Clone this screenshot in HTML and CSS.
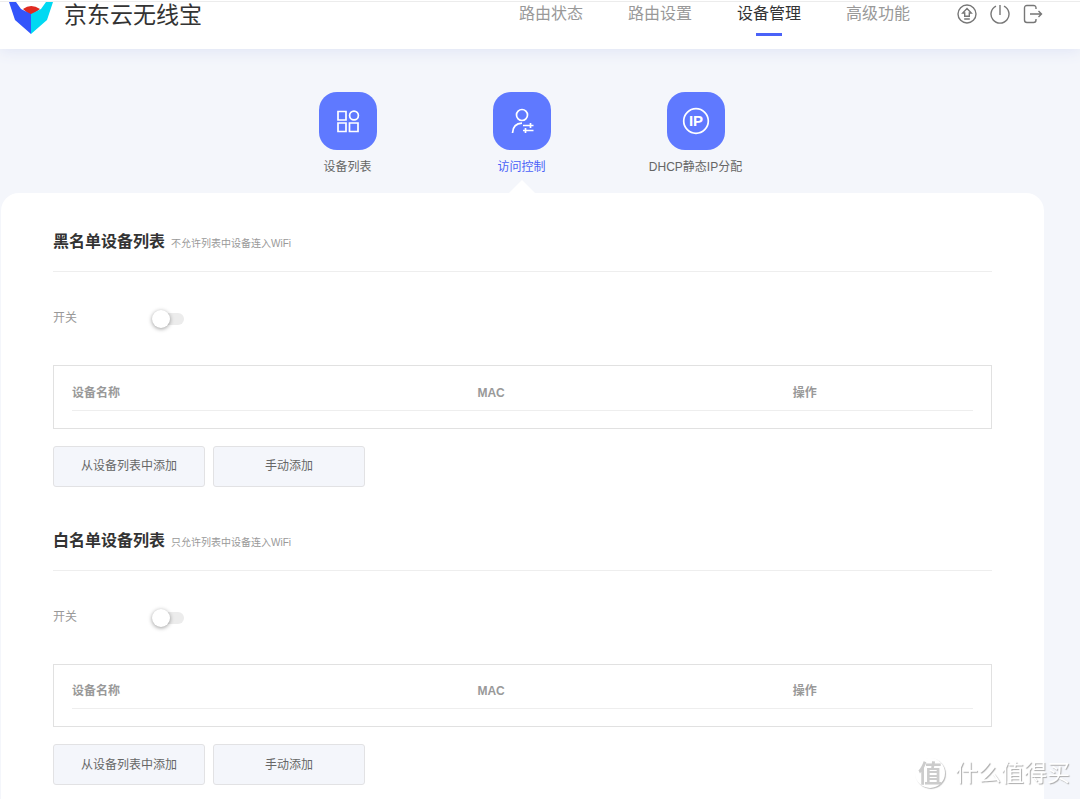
FILE: index.html
```html
<!DOCTYPE html>
<html lang="zh-CN">
<head>
<meta charset="utf-8">
<title>京东云无线宝</title>
<link rel="stylesheet" href="styles.css">
</head>
<body>
<header class="topbar">
  <a class="brand" href="#">
    <svg class="brand-mark" width="44" height="34" viewBox="0 0 44 34" aria-hidden="true">
      <path d="M14 9Q22 3 31 9L22 16Z" fill="#e02a20"/>
      <path d="M0 2H7L12 9L22 14V34L6 20Z" fill="#3355fb"/>
      <path d="M44 2H37L32 9L22 14V34L38 20Z" fill="#00d9f2"/>
    </svg>
    <span>京东云无线宝</span>
  </a>
  <nav class="menu">
    <a href="#">路由状态</a>
    <a href="#">路由设置</a>
    <a class="active" href="#">设备管理</a>
    <a href="#">高级功能</a>
  </nav>
  <div class="tools">
    <button type="button" aria-label="升级"><svg width="20" height="20" viewBox="0 0 20 20"><circle cx="10" cy="10" r="9"/><path d="M10 4.500L14.300 9H12.300V12.300H7.700V9H5.700ZM7.200 15H12.800"/></svg></button>
    <button type="button" aria-label="重启"><svg width="20" height="20" viewBox="0 0 20 20"><path d="M6 2.100A9 9 0 1 0 14 2.100M10 1V11"/></svg></button>
    <button type="button" aria-label="退出"><svg width="20" height="20" viewBox="0 0 20 20"><path d="M13 5V4Q13 1.500 10.500 1.500H4Q1.500 1.500 1.500 4V16Q1.500 18.500 4 18.500H10.500Q13 18.500 13 16V15M7 10H18.500M15.500 7L18.500 10L15.500 13"/></svg></button>
  </div>
</header>
<main class="page">
  <nav class="tabs">
    <a class="tab" href="#">
      <span class="tile"><svg width="32" height="32" viewBox="0 0 32 32"><path d="M6 6.500H14V15H6ZM6 18H14V26.500H6ZM17.500 18H26V26.500H17.500Z"/><circle cx="22" cy="10.500" r="4.400"/></svg></span>
      <span>设备列表</span>
    </a>
    <a class="tab current" href="#">
      <span class="tile"><svg width="32" height="32" viewBox="0 0 32 32"><circle cx="16" cy="10" r="5.500"/><path d="M6.500 28Q7 18.500 16 18.200M17 20.500H27.500M24.500 18V23M17 25.500H27.500M19.500 23V28"/></svg></span>
      <span>访问控制</span>
    </a>
    <a class="tab" href="#">
      <span class="tile"><svg width="32" height="32" viewBox="0 0 32 32"><circle cx="16" cy="16" r="12.300"/><text class="ip" x="16" y="21" text-anchor="middle">IP</text></svg></span>
      <span>DHCP静态IP分配</span>
    </a>
  </nav>
  <div class="panel">
    <section class="group">
      <div class="heading"><h2>黑名单设备列表</h2><p>不允许列表中设备连入WiFi</p></div>
      <div class="field"><label for="black">开关</label><input class="switch" id="black" type="checkbox" role="switch"></div>
      <div class="list">
        <table>
          <thead><tr><th class="name">设备名称</th><th class="mac">MAC</th><th>操作</th></tr></thead>
        </table>
      </div>
      <div class="actions"><button type="button">从设备列表中添加</button><button type="button">手动添加</button></div>
    </section>
    <section class="group">
      <div class="heading"><h2>白名单设备列表</h2><p>只允许列表中设备连入WiFi</p></div>
      <div class="field"><label for="white">开关</label><input class="switch" id="white" type="checkbox" role="switch"></div>
      <div class="list">
        <table>
          <thead><tr><th class="name">设备名称</th><th class="mac">MAC</th><th>操作</th></tr></thead>
        </table>
      </div>
      <div class="actions"><button type="button">从设备列表中添加</button><button type="button">手动添加</button></div>
    </section>
  </div>
</main>
<div class="watermark"><span class="seal">值</span><span>什么值得买</span></div>
</body>
</html>
```
FILE: styles.css
```css
* { box-sizing: border-box; }
body {
  display: flex;
  flex-direction: column;
  min-height: 100vh;
  margin: 0;
  background: #f4f6fb;
  color: #666;
  font: 12px/16px "Liberation Sans", "Noto Sans CJK SC", sans-serif;
}
a { color: inherit; text-decoration: none; }
button { font: inherit; color: inherit; cursor: pointer; }
h2, p { margin: 0; }

.topbar {
  display: flex;
  align-items: flex-start;
  height: 49px;
  padding: 0 37px 0 9px;
  background: #fff;
  border-top: 1px solid #fff;
  box-shadow: inset 0 1px #ececec, 0 2px 14px #dfe4f5;
}
.brand {
  display: flex;
  gap: 11px;
  margin-right: auto;
  color: #333;
  font-size: 23px;
  line-height: 28px;
}
.brand-mark { margin-top: -1px; }
.menu {
  display: flex;
  gap: 45px;
  color: #999;
  font-size: 16px;
  line-height: 26px;
}
.menu a { display: flex; flex-direction: column; align-items: center; }
.menu .active { color: #333; }
.menu .active::after {
  content: "";
  width: 26px;
  height: 3px;
  margin-top: 6px;
  background: #4a62f8;
}
.tools { display: flex; gap: 13px; margin: 3px 0 0 47px; }
.tools button { display: flex; padding: 0; border: 0; background: none; }
.tools svg { fill: none; stroke: #777; stroke-width: 1.4; }

.page {
  display: flex;
  flex: 1;
  flex-direction: column;
  margin: 0 36px 0 1px;
}
.tabs { display: flex; justify-content: center; padding: 43px 2px 0 0; }
.tab {
  display: flex;
  flex-direction: column;
  align-items: center;
  gap: 9px;
  width: 174px;
  height: 101px;
}
.tile {
  display: grid;
  place-items: center;
  width: 58px;
  height: 58px;
  border-radius: 18px;
  background: #5f79ff;
}
.tile svg { fill: none; stroke: #fff; stroke-width: 1.7; }
.tile .ip { fill: #fff; stroke: none; font-size: 15px; font-weight: bold; }
.current { color: #4a62f8; }
.current::after {
  content: "";
  margin-top: -4px;
  border: 13px solid transparent;
  border-top: 0;
  border-bottom-color: #fff;
}

.panel {
  flex: 1;
  padding: 37px 52px 0;
  border-radius: 18px 18px 0 0;
  background: #fff;
}
.group { padding-bottom: 42px; }
.group:last-child { padding-bottom: 0; }
.heading {
  display: flex;
  align-items: baseline;
  gap: 6px;
  height: 42px;
  border-bottom: 1px solid #eee;
}
.heading h2 { color: #333; font-size: 16px; line-height: 24px; }
.heading p { color: #999; font-size: 10px; }
.field { display: flex; gap: 75px; padding: 37px 0; color: #999; }
.field label { line-height: 18px; }
.switch {
  appearance: none;
  display: flex;
  align-items: center;
  width: 32px;
  height: 12px;
  margin: 4px 0 3px;
  border-radius: 6px;
  background: #ececec;
}
.switch::before {
  content: "";
  width: 18px;
  height: 18px;
  border-radius: 50%;
  background: #fff;
  box-shadow: 0 1px 4px #0006;
}
.switch:checked { justify-content: flex-end; background: #5f79ff; }
.list { padding: 18px 18px 17px; border: 1px solid #e1e1e1; }
table { width: 100%; border-collapse: collapse; table-layout: fixed; }
th {
  height: 26px;
  padding: 0 0 8px;
  border-bottom: 1px solid #eee;
  color: #999;
  text-align: left;
}
.name { width: 45%; }
.mac { width: 35%; }
.actions { display: flex; gap: 8px; margin-top: 17px; }
.actions button {
  width: 152px;
  height: 41px;
  border: 1px solid #e2e2e4;
  border-radius: 3px;
  background: #f4f6fb;
}

.watermark {
  position: fixed;
  right: 10px;
  bottom: 9px;
  display: flex;
  align-items: center;
  gap: 10px;
  color: #fff;
  font-size: 23px;
  line-height: 34px;
  text-shadow: 1px 1px 1px #aaa;
}
.seal {
  width: 30px;
  height: 30px;
  border-radius: 50%;
  box-shadow: 1px 1px 1px #bbb;
  color: #ccc;
  font: bold 24px/28px "Noto Sans CJK SC", sans-serif;
  text-align: center;
  text-shadow: none;
}
```
